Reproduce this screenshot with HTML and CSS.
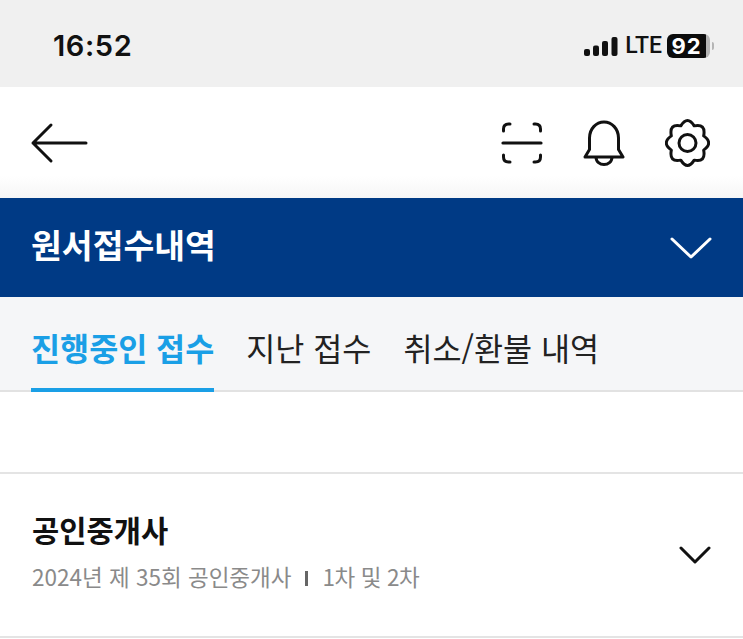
FILE: index.html
```html
<!DOCTYPE html>
<html lang="ko">

<head>
  <meta charset="UTF-8">
  <meta name="viewport" content="width=device-width, initial-scale=1.0">
  <title>원서접수내역</title>
  <link rel="stylesheet" href="styles.css">
</head>

<body>
  <div class="status-bar">
    <span class="clock">16:52</span>
    <div class="status-right">
      <svg class="signal" width="34" height="20" viewBox="0 0 34 20">
        <rect x="0" y="13" width="6" height="7" rx="2" />
        <rect x="9" y="9.5" width="6" height="10.5" rx="2" />
        <rect x="18" y="5" width="6" height="15" rx="2" />
        <rect x="27.500" y="1" width="6" height="19" rx="2" />
      </svg>
      <span class="lte">LTE</span>
      <div class="battery">
        <span class="battery-level">92</span>
        <span class="battery-rest"></span>
      </div>
      <span class="battery-tip"></span>
    </div>
  </div>

  <div class="nav-bar">
    <svg width="58" height="42" viewBox="0 0 58 42" fill="none" stroke="#111" stroke-width="3" stroke-linecap="round" stroke-linejoin="round">
      <path d="M3 21H56M21 3L3 21L21 39" />
    </svg>
    <div class="nav-icons">
      <svg width="42" height="42" viewBox="0 0 42 42" fill="none" stroke="#111" stroke-width="3" stroke-linecap="round">
        <path d="M2 21H40" stroke-width="3.200" />
        <path d="M2.500 9V7Q2.500 2 7.500 2H9M33 2H34.500Q39.500 2 39.500 7V9M2.500 33V35Q2.500 40 7.500 40H9M33 40H34.500Q39.500 40 39.500 35V33" />
      </svg>
      <svg width="42" height="46" viewBox="0 0 42 46" fill="none" stroke="#111" stroke-width="3" stroke-linejoin="round">
        <path d="M2 37L6.500 29.500V18C6.500 9 13 2 21 2C29 2 35.500 9 35.500 18V29.500L40 37Z" />
        <path d="M13 37C13 42 17 44.500 21 44.500C25 44.500 29 42 29 37" />
      </svg>
      <svg width="45" height="48" viewBox="0.5 0 45 48" fill="none" stroke="#111" stroke-width="3" stroke-linejoin="round">
        <circle cx="23" cy="24" r="8.500" />
        <path d="M16.300 6.860Q23 -3.800 29.700 6.860Q41.530 4.360 39.170 16.900Q49.200 24 39.170 31.100Q41.530 43.640 29.700 41.140Q23 51.800 16.300 41.140Q4.470 43.640 6.830 31.100Q-3.200 24 6.830 16.900Q4.470 4.360 16.300 6.860Z" />
      </svg>
    </div>
  </div>

  <div class="page-title">
    <h1>원서접수내역</h1>
    <svg width="42" height="24" viewBox="0 0 42 24" fill="none" stroke="#fff" stroke-width="3" stroke-linecap="round" stroke-linejoin="round">
      <path d="M2 3L21 21L40 3" />
    </svg>
  </div>

  <div class="tabs">
    <div class="tab active">진행중인 접수</div>
    <div class="tab">지난 접수</div>
    <div class="tab">취소/환불 내역</div>
  </div>

  <div class="gap"></div>

  <div class="exam-row">
    <div class="exam-text">
      <h2>공인중개사</h2>
      <p>2024년 제 35회 공인중개사<span class="sep"></span><span class="exam-stage">1차 및 2차</span></p>
    </div>
    <svg width="32" height="18" viewBox="0 0 32 18" fill="none" stroke="#111" stroke-width="3" stroke-linecap="round" stroke-linejoin="round">
      <path d="M2 2L16 16L30 2" />
    </svg>
  </div>
</body>

</html>
```

FILE: styles.css
```css
html,
body {
  height: 100%;
}

body {
  font-family: "Noto Sans CJK KR", "Noto Sans", sans-serif;
  background-color: #fff;
  color: #111;
  margin: 0;
  padding: 0;
  overflow: hidden;
}

h1,
h2,
p {
  margin: 0;
}

svg {
  display: block;
  flex: none;
}

.status-bar {
  height: 87px;
  background-color: #f0f0f0;
  display: flex;
  align-items: center;
  justify-content: space-between;
  padding: 4px 29px 0 53px;
  box-sizing: border-box;
}

.clock {
  font-family: Inter, sans-serif;
  font-size: 29px;
  font-weight: 600;
  letter-spacing: 0.6px;
  line-height: 1;
}

.status-right {
  display: flex;
  align-items: center;
}

.signal {
  fill: #111;
  margin-right: 7px;
}

.lte {
  font-family: Roboto, sans-serif;
  font-size: 23px;
  font-weight: 500;
  line-height: 1;
  margin-right: 5px;
}

.battery {
  width: 43px;
  height: 24px;
  border-radius: 6px;
  overflow: hidden;
  display: flex;
}

.battery-level {
  width: 39px;
  background-color: #0c0c0c;
  color: #fff;
  font-family: Inter, sans-serif;
  font-size: 22px;
  font-weight: 700;
  letter-spacing: 1px;
  line-height: 24px;
  text-align: center;
}

.battery-rest {
  flex: 1;
  background-color: #b5b5b5;
}

.battery-tip {
  width: 2px;
  height: 8px;
  margin-left: 2px;
  border-radius: 0 2px 2px 0;
  background-color: #b5b5b5;
}

.nav-bar {
  height: 111px;
  box-sizing: border-box;
  display: flex;
  align-items: center;
  justify-content: space-between;
  padding: 0 33px 0 30px;
  background: linear-gradient(#fff 80%, #f6f6f6);
}

.nav-icons {
  display: flex;
  align-items: center;
  gap: 40px;
}

.page-title {
  height: 99px;
  background-color: #003a85;
  color: #fff;
  display: flex;
  align-items: center;
  justify-content: space-between;
  padding: 0 31px 0 31px;
}

.page-title h1 {
  font-size: 33.5px;
  font-weight: 700;
  margin-top: -9px;
}

.tabs {
  height: 95px;
  box-sizing: border-box;
  background-color: #f5f6f8;
  border-bottom: 2px solid #e2e2e2;
  display: flex;
  gap: 32px;
  padding-left: 31px;
}

.tab {
  height: 95px;
  box-sizing: border-box;
  padding-top: 27px;
  font-size: 31.6px;
  line-height: 46px;
  color: #222;
}

.tab.active {
  color: #1a9fe6;
  font-weight: 700;
  border-bottom: 4px solid #1a9fe6;
}

.gap {
  height: 80px;
}

.exam-row {
  height: 166px;
  box-sizing: border-box;
  border-top: 2px solid #e4e4e4;
  border-bottom: 2px solid #e4e4e4;
  display: flex;
  align-items: center;
  justify-content: space-between;
  padding: 0 32px;
}

.exam-text {
  margin-top: -9px;
}

.exam-row h2 {
  font-size: 29.6px;
  font-weight: 700;
  line-height: 42px;
}

.exam-row p {
  margin-top: 9px;
  font-size: 22.5px;
  line-height: 32px;
  color: #8a8a8a;
}

.sep {
  display: inline-block;
  width: 3px;
  height: 15px;
  margin: 0 14px;
  background-color: #666;
}

.exam-stage {
  letter-spacing: -0.4px;
}
```
